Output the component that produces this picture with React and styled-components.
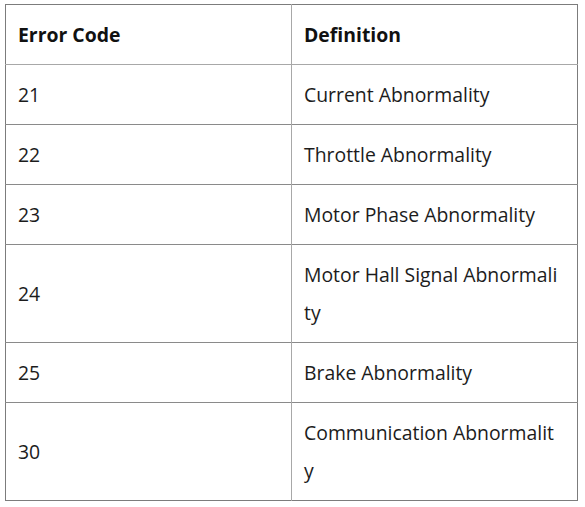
import React from 'react'
import styled, { createGlobalStyle } from 'styled-components'

const GlobalStyle = createGlobalStyle`
  body {
    margin: 0;
    background: #ffffff;
    font-family: "Open Sans", "Noto Sans", "Liberation Sans", sans-serif;
  }
`

const Page = styled.div`
  padding: 4px 0 0 5px;
`

const Table = styled.table`
  width: 573px;
  border-collapse: collapse;
  table-layout: fixed;
  border: 1px solid #7c7c7c;
`

const HeadCell = styled.th`
  width: 50%;
  height: 59px;
  padding: 0 12px;
  text-align: left;
  font-size: 19.4px;
  font-weight: 700;
  color: #111111;
  border-bottom: 1px solid #a8a8a8;
  border-left: ${p => (p.$first ? 'none' : '1px solid #a8a8a8')};
`

// definition column wraps mid-word, like the source page
const Cell = styled.td`
  padding: 11px ${p => (p.$wrap ? '17px' : '12px')} 10px 12px;
  font-size: 19.4px;
  line-height: 38px;
  color: #1c1c1c;
  word-break: break-all;
  vertical-align: middle;
  border-top: 1px solid #8a8a8a;
  border-left: ${p => (p.$first ? 'none' : '1px solid #a8a8a8')};
`

const errors = [
  { code: '21', text: 'Current Abnormality' },
  { code: '22', text: 'Throttle Abnormality' },
  { code: '23', text: 'Motor Phase Abnormality' },
  { code: '24', text: 'Motor Hall Signal Abnormality' },
  { code: '25', text: 'Brake Abnormality' },
  { code: '30', text: 'Communication Abnormality' }
]

export default function App () {
  return (
    <Page>
      <GlobalStyle />
      <Table>
        <thead>
          <tr>
            <HeadCell $first>Error Code</HeadCell>
            <HeadCell>Definition</HeadCell>
          </tr>
        </thead>
        <tbody>
          {errors.map(row => (
            <tr key={row.code}>
              <Cell $first>{row.code}</Cell>
              <Cell $wrap>{row.text}</Cell>
            </tr>
          ))}
        </tbody>
      </Table>
    </Page>
  )
}
